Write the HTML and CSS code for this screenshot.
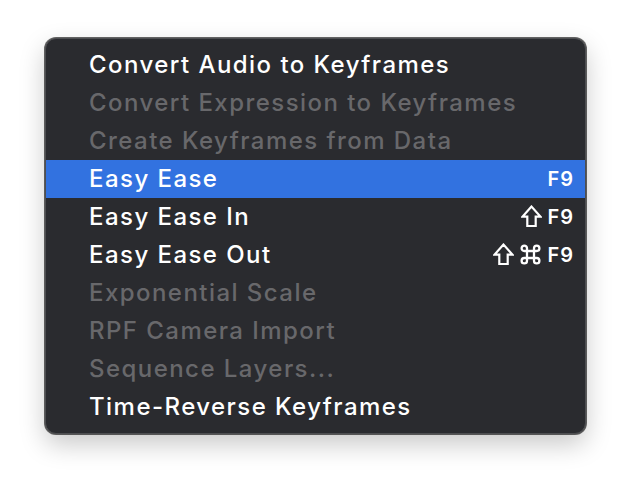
FILE: index.html
```html
<!DOCTYPE html>
<html>
<head>
<meta charset="utf-8">
<link rel="stylesheet" href="styles.css">
</head>
<body>
<div class="stage">
  <div class="menu">
    <div class="item">Convert Audio to Keyframes</div>
    <div class="item disabled">Convert Expression to Keyframes</div>
    <div class="item disabled">Create Keyframes from Data</div>
    <div class="item selected"><span>Easy Ease</span><span class="keys"><span class="f9">F9</span></span></div>
    <div class="item"><span>Easy Ease In</span><span class="keys">
      <svg class="shift" width="21" height="23" viewBox="0 0 21 23"><path d="M10.5 1.6 L1.6 11.6 H6.3 V21 H14.7 V11.6 H19.4 Z" fill="none" stroke="#fff" stroke-width="2.2" stroke-linejoin="miter"/></svg>
      <span class="f9">F9</span></span></div>
    <div class="item"><span>Easy Ease Out</span><span class="keys">
      <svg class="shift" width="21" height="23" viewBox="0 0 21 23"><path d="M10.5 1.6 L1.6 11.6 H6.3 V21 H14.7 V11.6 H19.4 Z" fill="none" stroke="#fff" stroke-width="2.2" stroke-linejoin="miter"/></svg>
      <svg class="cmd" width="23" height="23" viewBox="0 0 23 23"><path d="M8 8 H15 V15 H8 Z M8 8 V5.3 A2.7 2.7 0 1 0 5.3 8 H8 M15 8 V5.3 A2.7 2.7 0 1 1 17.7 8 H15 M15 15 V17.7 A2.7 2.7 0 1 0 17.7 15 H15 M8 15 V17.7 A2.7 2.7 0 1 1 5.3 15 H8" fill="none" stroke="#fff" stroke-width="2.3"/></svg>
      <span class="f9">F9</span></span></div>
    <div class="item disabled">Exponential Scale</div>
    <div class="item disabled">RPF Camera Import</div>
    <div class="item disabled">Sequence Layers...</div>
    <div class="item">Time-Reverse Keyframes</div>
  </div>
</div>
</body>
</html>
```
FILE: styles.css
```css
html, body {
  margin: 0;
  padding: 0;
  background: #ffffff;
}
.stage {
  width: 632px;
  height: 488px;
  padding: 38px 0 0 45px;
  box-sizing: border-box;
}
.menu {
  width: 541px;
  box-sizing: border-box;
  padding: 7px 0;
  background: #2a2b2f;
  border: 1px solid #4d4e51;
  border-radius: 11px;
  box-shadow: 0 0 0 1px rgba(0,0,0,0.6), 0 10px 26px rgba(0,0,0,0.22);
  font-family: "Inter", "Liberation Sans", sans-serif;
  font-size: 24px;
  font-weight: 500;
  letter-spacing: 1.45px;
  color: #ffffff;
}
.item {
  height: 38px;
  display: flex;
  align-items: center;
  justify-content: space-between;
  padding: 0 12px 1px 43px;
  box-sizing: border-box;
  white-space: nowrap;
}
.item.disabled {
  color: #68686b;
}
.item.selected {
  background: #3272e0;
}
.keys {
  display: flex;
  align-items: center;
  gap: 5px;
}
.f9 {
  font-size: 20px;
  font-weight: 600;
  letter-spacing: 1px;
  margin-right: -1px;
}
.cmd, .shift {
  display: block;
}
```
